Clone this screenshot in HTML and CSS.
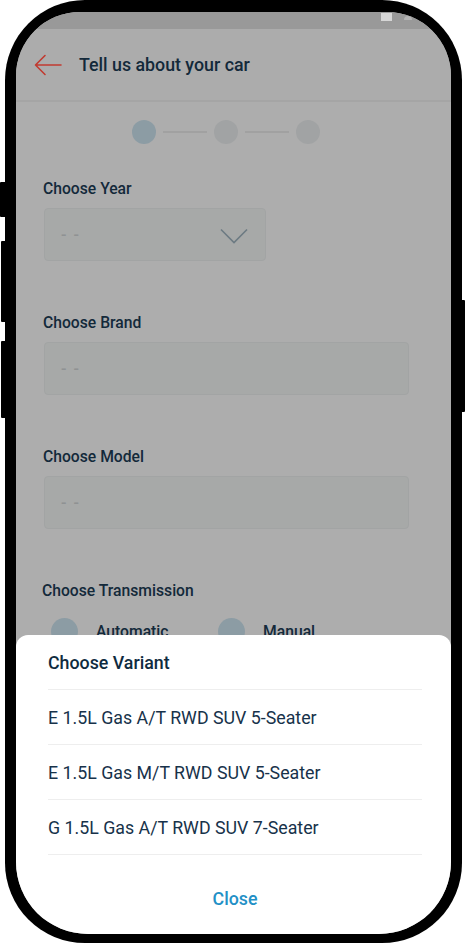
FILE: index.html
```html
<!DOCTYPE html>
<html lang="en">
<head>
<meta charset="utf-8">
<title>Tell us about your car</title>
<link rel="stylesheet" href="styles.css">
</head>
<body>
<div class="device">
  <span class="side-btn btn-l1"></span>
  <span class="side-btn btn-l2"></span>
  <span class="side-btn btn-l3"></span>
  <span class="side-btn btn-r1"></span>
  <div class="phone">
    <div class="screen">
      <div class="status-bar">
        <span class="status-icon"></span>
        <span class="status-icon2"></span>
      </div>
      <header class="app-bar">
        <svg class="back" width="28" height="22" viewBox="0 0 28 22" aria-hidden="true">
          <path d="M27 11H1.5M11 1.5L1.5 11L11 20.5" fill="none" stroke="#c13a30" stroke-width="1.6" stroke-linecap="round" stroke-linejoin="round"/>
        </svg>
        <h1 class="title">Tell us about your car</h1>
      </header>
      <div class="stepper">
        <span class="step step-active"></span>
        <span class="step-line"></span>
        <span class="step"></span>
        <span class="step-line"></span>
        <span class="step"></span>
      </div>
      <main class="form">
        <section class="field">
          <div class="label">Choose Year</div>
          <div class="select select-short">
            <span class="placeholder">- -</span>
            <svg class="chevron" width="28" height="16" viewBox="0 0 28 16" aria-hidden="true">
              <path d="M1 1.5L14 14.5L27 1.5" fill="none" stroke="#6d7b83" stroke-width="1.6"/>
            </svg>
          </div>
        </section>
        <section class="field">
          <div class="label">Choose Brand</div>
          <div class="select"><span class="placeholder">- -</span></div>
        </section>
        <section class="field">
          <div class="label">Choose Model</div>
          <div class="select"><span class="placeholder">- -</span></div>
        </section>
        <section class="field field-trans">
          <div class="label">Choose Transmission</div>
          <div class="radios">
            <div class="radio"><span class="radio-dot"></span><span class="radio-text">Automatic</span></div>
            <div class="radio"><span class="radio-dot"></span><span class="radio-text">Manual</span></div>
          </div>
        </section>
      </main>
      <div class="sheet">
        <div class="sheet-title">Choose Variant</div>
        <ul class="variants">
          <li class="variant">E 1.5L Gas A/T RWD SUV 5-Seater</li>
          <li class="variant">E 1.5L Gas M/T RWD SUV 5-Seater</li>
          <li class="variant">G 1.5L Gas A/T RWD SUV 7-Seater</li>
        </ul>
        <div class="close">Close</div>
      </div>
    </div>
  </div>
</div>
</body>
</html>
```
FILE: styles.css
```css
html, body {
  margin: 0;
  padding: 0;
  background: #ffffff;
}
body {
  width: 466px;
  height: 945px;
  overflow: hidden;
  font-family: Roboto, "Noto Sans", "Liberation Sans", sans-serif;
}
.device {
  position: relative;
  width: 466px;
  height: 945px;
}
.side-btn {
  position: absolute;
  background: #000;
  border-radius: 1px;
}
.btn-l1 { left: 0; top: 182px; width: 6px; height: 35px; }
.btn-l2 { left: 1px; top: 241px; width: 5px; height: 81px; }
.btn-l3 { left: 1px; top: 341px; width: 5px; height: 77px; }
.btn-r1 { left: 460px; top: 300px; width: 5px; height: 112px; }

.phone {
  margin-left: 5px;
  width: 457px;
  height: 943px;
  box-sizing: border-box;
  padding: 12px 11px 9px 11px;
  background: #000;
  border-radius: 80px;
}
.screen {
  position: relative;
  height: 100%;
  overflow: hidden;
  border-radius: 64px 64px 72px 72px;
  background: #adadad;
  display: flex;
  flex-direction: column;
}
.status-bar {
  position: relative;
  height: 17px;
  flex: none;
  background: #999999;
}
.status-icon {
  position: absolute;
  left: 365px;
  top: 1px;
  width: 11px;
  height: 8px;
  background: #d6d6d6;
}
.status-icon2 {
  position: absolute;
  left: 388px;
  top: 4px;
  width: 8px;
  height: 4px;
  border-radius: 4px 4px 0 0;
  background: #b4b4b4;
}
.app-bar {
  flex: none;
  height: 71px;
  display: flex;
  align-items: center;
  background: #acacac;
  border-bottom: 2px solid #a5a5a5;
}
.back {
  margin-left: 18px;
  flex: none;
}
.title {
  margin: 0 0 0 17px;
  font-size: 17.8px;
  font-weight: 500;
  color: #13293a;
}
.stepper {
  display: flex;
  align-items: center;
  justify-content: center;
  margin-top: 18px;
  padding-right: 16px;
  gap: 7px;
}
.step {
  width: 24px;
  height: 24px;
  border-radius: 50%;
  background: #a1a3a4;
}
.step-active {
  background: #8c9ca4;
}
.step-line {
  width: 44px;
  height: 2px;
  background: #a1a1a1;
}
.form {
  padding: 34px 42px 0 27px;
}
.field {
  margin-bottom: 51px;
}
.label {
  font-size: 15.7px;
  line-height: 20px;
  font-weight: 500;
  color: #13293a;
  padding-top: 1px;
  margin-bottom: 9px;
}
.select {
  margin-left: 1px;
  height: 53px;
  box-sizing: border-box;
  border: 1px solid #a2a4a4;
  border-radius: 4px;
  background: #a7a9a8;
  display: flex;
  align-items: center;
  justify-content: space-between;
  padding: 0 17px 0 16px;
}
.select-short {
  width: 222px;
}
.placeholder {
  font-size: 16px;
  font-weight: 500;
  color: #8f9293;
  letter-spacing: 1.5px;
}
.chevron {
  display: block;
  margin-top: 2px;
}
.field-trans .label {
  margin-left: -1px;
  margin-bottom: 17px;
}
.radios {
  display: flex;
  padding-left: 8px;
}
.radio {
  display: flex;
  align-items: center;
  width: 167px;
}
.radio-dot {
  width: 27px;
  height: 27px;
  border-radius: 50%;
  background: #8c9ca4;
  margin-right: 18px;
}
.radio-text {
  font-size: 15.7px;
  font-weight: 500;
  color: #13293a;
}
.sheet {
  position: absolute;
  left: 0;
  right: 0;
  top: 623px;
  bottom: 0;
  background: #ffffff;
  border-radius: 12px 12px 0 0;
  padding: 0 29px 0 32px;
}
.sheet-title {
  height: 54px;
  display: flex;
  align-items: center;
  font-size: 17.8px;
  font-weight: 500;
  color: #0f2b40;
  border-bottom: 1px solid #eeeeee;
}
.variants {
  list-style: none;
  margin: 0;
  padding: 0;
}
.variant {
  height: 54px;
  display: flex;
  align-items: center;
  font-size: 17.8px;
  color: #17324a;
  border-bottom: 1px solid #eeeeee;
}
.close {
  padding-top: 34px;
  line-height: 20px;
  text-align: center;
  font-size: 17.8px;
  font-weight: 500;
  color: #2290c6;
}
```
